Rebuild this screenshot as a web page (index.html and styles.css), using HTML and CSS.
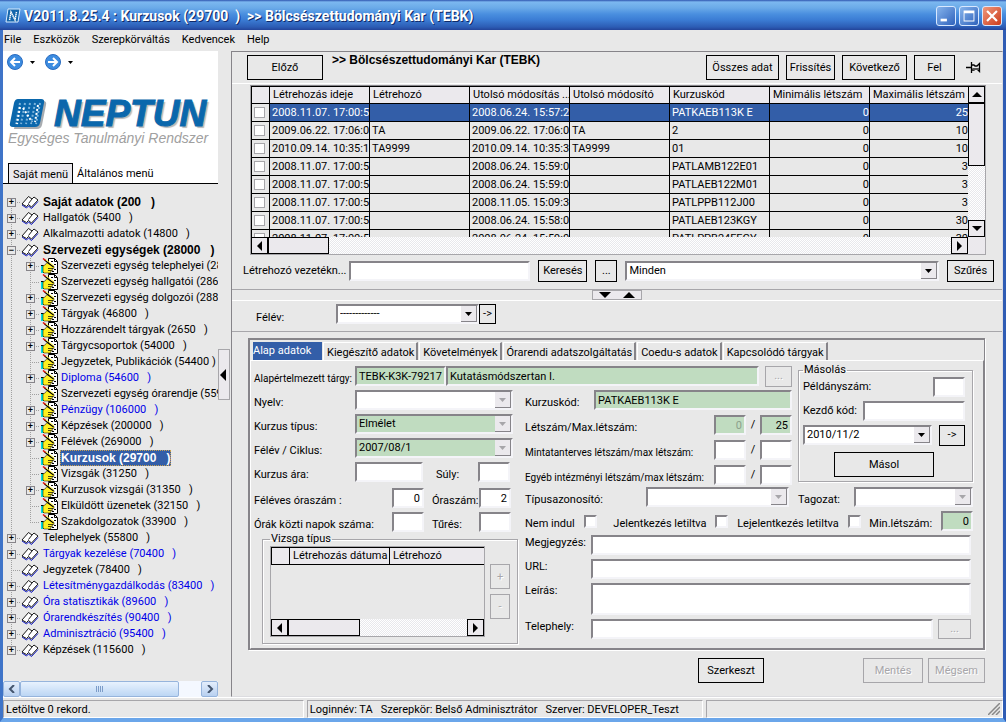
FILE: index.html
```html
<!DOCTYPE html>
<html lang="hu">
<head>
<meta charset="utf-8">
<title>Kurzusok (29700)</title>
<link rel="stylesheet" href="styles.css">
</head>
<body>
<svg class="defs" aria-hidden="true">
  <symbol id="book" viewBox="0 0 18 14">
    <path d="M1 9L7.500 1.500L11 4L13 2L17 5L10.500 12L7.500 9.500L5.500 11.500Z" fill="#fff"/>
    <path d="M1 10L5.500 13L7.500 11L10.500 13.500L17 6.500" fill="none" stroke="#1018c8"/>
    <path d="M1 9L7.500 1.500L11 4L13 2L17 5L10.500 12L7.500 9.500L5.500 11.500ZM11 4L7.500 8.500" fill="none" stroke="#000" stroke-width=".9"/>
  </symbol>
  <symbol id="hand" viewBox="0 0 17 16">
    <path d="M7.500 0.500H13.500L16.500 3.500V15.500H7.500Z" fill="#fff" stroke="#000"/>
    <path d="M13.500 0.500V3.500H16M10 3.500h2M13 6.500h2M13 11.500h2M11 13.500h2" fill="none" stroke="#000"/>
    <path d="M0 8h2v7H0z" fill="#00e0e0"/>
    <path d="M0 7.500H2.500V15" fill="none" stroke="#000"/>
    <path d="M2 8L4 7L6 4.500L8 6L13 8.500V10.500L11 11L11.500 12.500L10 13L9.500 15L3 15L2 14Z" fill="#fff020" stroke="#000" stroke-width=".5"/>
    <path d="M7 10.500H12M7 12.500H10.500" stroke="#000" stroke-width=".7"/>
    <path d="M3.500 2L12.500 9" stroke="#000" stroke-width="1.200"/>
    <path d="M4.500 1.500L13 8" stroke="#fff020" stroke-width=".9"/>
    <path d="M2 0.500L4.500 2.500" stroke="#e01010" stroke-width="1.600"/>
  </symbol>
  <symbol id="up" viewBox="0 0 10 5"><path d="M5 0L10 5H0Z"/></symbol>
  <symbol id="down" viewBox="0 0 10 5"><path d="M0 0H10L5 5Z"/></symbol>
  <symbol id="left" viewBox="0 0 5 10"><path d="M5 0V10L0 5Z"/></symbol>
  <symbol id="right" viewBox="0 0 5 10"><path d="M0 0V10L5 5Z"/></symbol>
</svg>
<div class="window">
  <header class="titlebar">
    <svg class="app-icon" viewBox="0 0 16 16"><path d="M3 1H15L13 14H1Z" fill="#1466ac" stroke="#d8ecff"/><path d="M4.500 12L6 4L10 12L11.500 4" fill="none" stroke="#fff" stroke-width="1.500" stroke-dasharray="1.500 .5"/></svg>
    <h1>V2011.8.25.4 : Kurzusok (29700  )  &gt;&gt; Bölcsészettudományi Kar (TEBK)</h1>
    <button class="win-btn" aria-label="Kis méret"><svg viewBox="0 0 20 20"><path d="M4 13h7v3H4z" fill="#fff"/></svg></button>
    <button class="win-btn" aria-label="Teljes méret"><svg viewBox="0 0 20 20"><path d="M4 4h12v12H4zM5 7v8h10V7z" fill="#fff" fill-rule="evenodd"/></svg></button>
    <button class="win-btn close" aria-label="Bezárás"><svg viewBox="0 0 20 20"><path d="M4.500 4.500l11 11M15.500 4.500l-11 11" stroke="#fff" stroke-width="2.400"/></svg></button>
  </header>
  <nav class="menubar"><a href="#">File</a><a href="#">Eszközök</a><a href="#">Szerepkörváltás</a><a href="#">Kedvencek</a><a href="#">Help</a></nav>

  <div class="main">
    <aside class="side">
      <div class="side-top">
        <div class="history">
          <button aria-label="Vissza"><svg width="16" height="16" viewBox="0 0 16 16"><circle cx="8" cy="8" r="7.500" fill="#3c8ce0" stroke="#2a6cc0"/><path d="M13 8H4M8 4L4 8L8 12" fill="none" stroke="#fff" stroke-width="2"/></svg></button>
          <svg class="caret" viewBox="0 0 5 3"><path d="M0 0H5L2.500 3Z"/></svg>
          <button aria-label="Előre"><svg width="16" height="16" viewBox="0 0 16 16"><circle cx="8" cy="8" r="7.500" fill="#3c8ce0" stroke="#2a6cc0"/><path d="M3 8H12M8 4L12 8L8 12" fill="none" stroke="#fff" stroke-width="2"/></svg></button>
          <svg class="caret" viewBox="0 0 5 3"><path d="M0 0H5L2.500 3Z"/></svg>
        </div>
        <div class="logo">
          <svg class="logo-mark" viewBox="0 0 38 32">
            <path d="M10 3H34Q38 3 37 7L33 27Q32 31 28 31H5Z" fill="#a8acb0"/>
            <path d="M9 1H32Q36 1 35 5L31 25Q30 29 26 29H4Q0 29 1 25L5 5Q6 1 9 1Z" fill="#0a67ac"/>
            <path d="M11 5L7 26M16 5L12 26M21 5L17 26M26 5L22 26M31 5L27 26" stroke="#7cb4dc" stroke-width="2" stroke-dasharray="2 2"/>
            <path d="M11 9L8 26M14 10L23 24M29 7L26 24" stroke="#fff" stroke-width="2" stroke-dasharray="2 2"/>
          </svg>
          <span class="logo-name">NEPTUN</span>
        </div>
        <p class="logo-sub">Egységes Tanulmányi Rendszer</p>
        <div class="side-tabs"><button class="on">Saját menü</button><button>Általános menü</button></div>
      </div>
      <ul class="tree">
        <li><div class="row b"><i class="ex">+</i><svg><use href="#book"/></svg><a href="#">Saját adatok (200   )</a></div></li>
        <li><div class="row"><i class="ex">+</i><svg><use href="#book"/></svg><a href="#">Hallgatók (5400   )</a></div></li>
        <li><div class="row"><i class="ex">+</i><svg><use href="#book"/></svg><a href="#">Alkalmazotti adatok (14800   )</a></div></li>
        <li><div class="row b"><i class="ex">−</i><svg><use href="#book"/></svg><a href="#">Szervezeti egységek (28000   )</a></div>
          <ul>
            <li><div class="row"><i class="ex">+</i><svg><use href="#hand"/></svg><a href="#">Szervezeti egység telephelyei (28</a></div></li>
            <li><div class="row"><i></i><svg><use href="#hand"/></svg><a href="#">Szervezeti egység hallgatói (2860</a></div></li>
            <li><div class="row"><i class="ex">+</i><svg><use href="#hand"/></svg><a href="#">Szervezeti egység dolgozói (2880</a></div></li>
            <li><div class="row"><i class="ex">+</i><svg><use href="#hand"/></svg><a href="#">Tárgyak (46800   )</a></div></li>
            <li><div class="row"><i class="ex">+</i><svg><use href="#hand"/></svg><a href="#">Hozzárendelt tárgyak (2650   )</a></div></li>
            <li><div class="row"><i class="ex">+</i><svg><use href="#hand"/></svg><a href="#">Tárgycsoportok (54000   )</a></div></li>
            <li><div class="row"><i></i><svg><use href="#hand"/></svg><a href="#">Jegyzetek, Publikációk (54400 )</a></div></li>
            <li><div class="row blue"><i class="ex">+</i><svg><use href="#hand"/></svg><a href="#">Diploma (54600   )</a></div></li>
            <li><div class="row"><i></i><svg><use href="#hand"/></svg><a href="#">Szervezeti egység órarendje (559</a></div></li>
            <li><div class="row blue"><i class="ex">+</i><svg><use href="#hand"/></svg><a href="#">Pénzügy (106000   )</a></div></li>
            <li><div class="row"><i class="ex">+</i><svg><use href="#hand"/></svg><a href="#">Képzések (200000   )</a></div></li>
            <li><div class="row"><i class="ex">+</i><svg><use href="#hand"/></svg><a href="#">Félévek (269000   )</a></div></li>
            <li><div class="row b sel"><i></i><svg><use href="#hand"/></svg><a href="#">Kurzusok (29700   )</a></div></li>
            <li><div class="row"><i></i><svg><use href="#hand"/></svg><a href="#">Vizsgák (31250   )</a></div></li>
            <li><div class="row"><i class="ex">+</i><svg><use href="#hand"/></svg><a href="#">Kurzusok vizsgái (31350   )</a></div></li>
            <li><div class="row"><i></i><svg><use href="#hand"/></svg><a href="#">Elküldött üzenetek (32150   )</a></div></li>
            <li><div class="row"><i></i><svg><use href="#hand"/></svg><a href="#">Szakdolgozatok (33900   )</a></div></li>
          </ul>
        </li>
        <li><div class="row"><i class="ex">+</i><svg><use href="#book"/></svg><a href="#">Telephelyek (55800   )</a></div></li>
        <li><div class="row blue"><i class="ex">+</i><svg><use href="#book"/></svg><a href="#">Tárgyak kezelése (70400   )</a></div></li>
        <li><div class="row"><i></i><svg><use href="#book"/></svg><a href="#">Jegyzetek (78400   )</a></div></li>
        <li><div class="row blue"><i class="ex">+</i><svg><use href="#book"/></svg><a href="#">Létesítménygazdálkodás (83400   )</a></div></li>
        <li><div class="row blue"><i class="ex">+</i><svg><use href="#book"/></svg><a href="#">Óra statisztikák (89600   )</a></div></li>
        <li><div class="row blue"><i class="ex">+</i><svg><use href="#book"/></svg><a href="#">Órarendkészítés (90400   )</a></div></li>
        <li><div class="row blue"><i class="ex">+</i><svg><use href="#book"/></svg><a href="#">Adminisztráció (95400   )</a></div></li>
        <li><div class="row"><i class="ex">+</i><svg><use href="#book"/></svg><a href="#">Képzések (115600   )</a></div></li>
      </ul>
      <div class="xp-scroll">
        <button aria-label="Balra"><svg viewBox="0 0 8 8"><path d="M6 0L2 4L6 8" fill="none" stroke="#44556e" stroke-width="2"/></svg></button>
        <span class="xp-thumb"></span>
        <button aria-label="Jobbra"><svg viewBox="0 0 8 8"><path d="M2 0L6 4L2 8" fill="none" stroke="#44556e" stroke-width="2"/></svg></button>
      </div>
    </aside>
    <div class="splitter"><button class="collapse" aria-label="Panel elrejtése"><svg width="8" height="12"><use href="#left"/></svg></button></div>

    <main class="content">
      <div class="toolbar">
        <button class="btn prev">Előző</button>
        <h2>&gt;&gt; Bölcsészettudományi Kar (TEBK)</h2>
        <button class="btn w73">Összes adat</button>
        <button class="btn w49">Frissítés</button>
        <button class="btn w65">Következő</button>
        <button class="btn w41">Fel</button>
        <svg class="pin" viewBox="0 0 15 11"><path d="M0 5.500H6M5.500 0V11M6 3H8L9 4H11L13.500 1.500V9.500L11 7H9L8 8H6" fill="none" stroke="#000" stroke-width="1.300"/><path d="M6 6h7v2H7z" fill="#555"/></svg>
      </div>

      <section class="list">
        <div class="grid">
          <div class="grid-main">
            <div class="table-clip">
              <table>
                <colgroup><col class="c-check"><col class="c"><col class="c"><col class="c"><col class="c"><col class="c"><col class="c"><col></colgroup>
                <thead><tr><th></th><th>Létrehozás ideje</th><th>Létrehozó</th><th>Utolsó módosítás ...</th><th>Utolsó módosító</th><th>Kurzuskód</th><th>Minimális létszám</th><th>Maximális létszám</th></tr></thead>
                <tbody>
                  <tr class="active"><td><input type="checkbox" aria-label="Sor 1"></td><td>2008.11.07. 17:00:5</td><td></td><td>2008.06.24. 15:57:2</td><td></td><td>PATKAEB113K E</td><td class="n">0</td><td class="n">25</td></tr>
                  <tr><td><input type="checkbox" aria-label="Sor 2"></td><td>2009.06.22. 17:06:0</td><td>TA</td><td>2009.06.22. 17:06:0</td><td>TA</td><td>2</td><td class="n">0</td><td class="n">10</td></tr>
                  <tr><td><input type="checkbox" aria-label="Sor 3"></td><td>2010.09.14. 10:35:1</td><td>TA9999</td><td>2010.09.14. 10:35:3</td><td>TA9999</td><td>01</td><td class="n">0</td><td class="n">10</td></tr>
                  <tr><td><input type="checkbox" aria-label="Sor 4"></td><td>2008.11.07. 17:00:5</td><td></td><td>2008.06.24. 15:59:0</td><td></td><td>PATLAMB122E01</td><td class="n">0</td><td class="n">3</td></tr>
                  <tr><td><input type="checkbox" aria-label="Sor 5"></td><td>2008.11.07. 17:00:5</td><td></td><td>2008.06.24. 15:59:0</td><td></td><td>PATLAEB122M01</td><td class="n">0</td><td class="n">3</td></tr>
                  <tr><td><input type="checkbox" aria-label="Sor 6"></td><td>2008.11.07. 17:00:5</td><td></td><td>2008.11.05. 15:09:3</td><td></td><td>PATLPPB112J00</td><td class="n">0</td><td class="n">3</td></tr>
                  <tr><td><input type="checkbox" aria-label="Sor 7"></td><td>2008.11.07. 17:00:5</td><td></td><td>2008.06.24. 15:58:0</td><td></td><td>PATLAEB123KGY</td><td class="n">0</td><td class="n">30</td></tr>
                  <tr><td><input type="checkbox" aria-label="Sor 8"></td><td>2008.11.07. 17:00:5</td><td></td><td>2008.06.24. 15:59:0</td><td></td><td>PATLPPB24FFGY</td><td class="n">0</td><td class="n">30</td></tr>
                </tbody>
              </table>
            </div>
            <div class="vscroll"><button aria-label="Fel"><svg width="10" height="5"><use href="#up"/></svg></button><span class="vthumb"></span><button aria-label="Le"><svg width="10" height="5"><use href="#down"/></svg></button></div>
          </div>
          <div class="hscroll"><button aria-label="Balra"><svg width="5" height="10"><use href="#left"/></svg></button><span class="hthumb"></span><button aria-label="Jobbra"><svg width="5" height="10"><use href="#right"/></svg></button><span class="corner"></span></div>
        </div>
        <div class="search">
          <label for="q">Létrehozó vezetékn...</label>
          <input id="q" type="text">
          <button class="btn w49">Keresés</button>
          <button class="btn w22">...</button>
          <select aria-label="Szűrő"><option>Minden</option></select>
          <button class="btn w47">Szűrés</button>
        </div>
      </section>
      <div class="updown"><button aria-label="Lista le és fel"><svg width="12" height="6"><use href="#down"/></svg><svg width="12" height="6"><use href="#up"/></svg></button></div>

      <div class="term">
        <label for="felev">Félév:</label>
        <select id="felev"><option>-------------</option></select>
        <button class="btn go">-&gt;</button>
      </div>

      <section class="tabbox">
        <div class="tabs">
          <button class="on">Alap adatok</button><button>Kiegészítő adatok</button><button>Követelmények</button><button>Órarendi adatszolgáltatás</button><button>Coedu-s adatok</button><button>Kapcsolódó tárgyak</button>
        </div>
        <form class="form">
          <div class="f subject">
            <label class="long" for="t1">Alapértelmezett tárgy:</label>
            <input id="t1" class="green code" value="TEBK-K3K-79217">
            <input class="green grow" aria-label="Tárgynév" value="Kutatásmódszertan I.">
            <button type="button" class="btn w27" disabled>...</button>
          </div>

          <div class="left">
            <div class="f"><label for="ny">Nyelv:</label><select id="ny" disabled class="grow"><option></option></select></div>
            <div class="f"><label for="kt">Kurzus típus:</label><select id="kt" disabled class="green grow"><option>Elmélet</option></select></div>
            <div class="f"><label for="fc">Félév / Ciklus:</label><select id="fc" disabled class="green grow"><option>2007/08/1</option></select></div>
            <div class="f"><label for="ka">Kurzus ára:</label><input id="ka" class="price"><label class="l2" for="su">Súly:</label><input id="su" class="sm"></div>
            <div class="f hours"><label class="wide" for="fo">Féléves óraszám :</label><input id="fo" class="sm n" value="0"><label class="l3" for="os">Óraszám:</label><input id="os" class="sm n" value="2"></div>
            <div class="f"><label class="wide" for="on">Órák közti napok száma:</label><input id="on" class="sm"><label class="l3" for="tu">Tűrés:</label><input id="tu" class="sm"></div>
            <fieldset class="exam">
              <legend>Vizsga típus</legend>
              <div class="exam-grid">
                <table><colgroup><col class="c-check"><col class="c"><col></colgroup><thead><tr><th></th><th>Létrehozás dátuma</th><th>Létrehozó</th></tr></thead></table>
                <div class="hscroll"><button type="button" aria-label="Balra"><svg width="5" height="10"><use href="#left"/></svg></button><span class="hthumb"></span><button type="button" aria-label="Jobbra"><svg width="5" height="10"><use href="#right"/></svg></button></div>
              </div>
              <div class="pm"><button type="button" class="btn" disabled>+</button><button type="button" class="btn" disabled>-</button></div>
            </fieldset>
          </div>

          <div class="mid">
            <div class="f"><label class="short" for="kk">Kurzuskód:</label><input id="kk" class="green grow" value="PATKAEB113K E"></div>
            <div class="f"><label class="grow" for="l1">Létszám/Max.létszám:</label><input id="l1" class="green sm n" disabled value="0"><span class="slash">/</span><input class="green sm n" aria-label="Max.létszám" value="25"></div>
            <div class="f"><label class="grow long" for="m1">Mintatanterves létszám/max létszám:</label><input id="m1" class="sm"><span class="slash">/</span><input class="sm" aria-label="Max létszám"></div>
            <div class="f"><label class="grow long" for="e1">Egyéb intézményi létszám/max létszám:</label><input id="e1" class="sm"><span class="slash">/</span><input class="sm" aria-label="Max létszám"></div>
          </div>

          <fieldset class="copy">
            <legend>Másolás</legend>
            <div class="f"><label class="grow" for="pd">Példányszám:</label><input id="pd" class="sm"></div>
            <div class="f"><label class="kez" for="kz">Kezdő kód:</label><input id="kz" class="grow"></div>
            <div class="f"><select class="grow" aria-label="Félév"><option>2010/11/2</option></select><button type="button" class="btn w26">-&gt;</button></div>
            <button type="button" class="btn copy-btn">Másol</button>
          </fieldset>

          <div class="bottom">
            <div class="f types"><label for="ta" class="tl">Típusazonosító:</label><select id="ta" disabled class="ts"><option></option></select><label class="tg" for="tz">Tagozat:</label><select id="tz" disabled class="tz"><option></option></select></div>
            <div class="f checks"><label for="c1">Nem indul</label><input type="checkbox" id="c1"><label for="c2" class="c2">Jelentkezés letiltva</label><input type="checkbox" id="c2"><label for="c3">Lejelentkezés letiltva</label><input type="checkbox" id="c3"><label class="min" for="ml">Min.létszám:</label><input id="ml" class="green sm n" value="0"></div>
            <div class="f"><label class="bl" for="mj">Megjegyzés:</label><input id="mj" class="grow"></div>
            <div class="f"><label class="bl" for="url">URL:</label><input id="url" class="grow"></div>
            <div class="f"><label class="bl" for="le">Leírás:</label><textarea id="le" class="grow"></textarea></div>
            <div class="f"><label class="bl" for="th">Telephely:</label><input id="th" class="grow"><button type="button" class="btn w33" disabled>...</button></div>
          </div>
        </form>
      </section>

      <div class="actions">
        <button class="btn edit">Szerkeszt</button>
        <button class="btn save" disabled>Mentés</button>
        <button class="btn cancel" disabled>Mégsem</button>
      </div>
    </main>
  </div>

  <footer class="status">
    <span class="s1">Letöltve 0 rekord.</span>
    <span class="s2">Loginnév: TA   Szerepkör: Belső Adminisztrátor   Szerver: DEVELOPER_Teszt</span>
    <span class="s3"><svg viewBox="0 0 12 12"><path d="M0 12L12 0M4 12L12 4M8 12L12 8" stroke="#888" stroke-width="1.500"/></svg></span>
  </footer>
</div>
</body>
</html>
```
FILE: styles.css
```css
:root {
  --bg: #e8e8e8;
  --btn: #ebe9ed;
  --dark: #868489;
  --mid: #a7a6aa;
  --green: #c0dcc0;
  --sel: #335ea8;
}
* { box-sizing: border-box; }
body {
  margin: 0;
  background: var(--bg);
  color: #000;
  font: 11px/14px Roboto, "Liberation Sans", sans-serif;
}
button, input, select, textarea { font: inherit; color: inherit; margin: 0; border-radius: 0; outline: 0; }
a { color: inherit; text-decoration: none; }
.defs { position: absolute; width: 0; height: 0; }
.window {
  display: flex;
  flex-direction: column;
  min-height: 100vh;
  border: solid #2450a8;
  border-width: 0 3px 4px;
  border-color: #2450a8 #2f5cb4 #6ba6ea #3f74c8;
  background: var(--bg);
}

/* title and menu */
.titlebar {
  display: flex;
  align-items: center;
  gap: 3px;
  height: 30px;
  margin: 0 -3px;
  padding: 2px 4px 0 5px;
  background: linear-gradient(#2f56b0 0, #7cb8f0 2px, #6aaae8 8px, #4a8fdf 14px, #3b7cd4 20px, #2c5cb4 27px, #23449a 30px);
}
.app-icon { width: 16px; height: 16px; }
.titlebar h1 {
  flex: 1;
  margin: 0;
  color: #fff;
  font: bold 14px/18px Roboto, sans-serif;
  white-space: pre;
  text-shadow: 1px 1px #102a68;
}
.win-btn {
  width: 20px;
  height: 20px;
  padding: 0;
  border: 1px solid #d8e8ff;
  border-radius: 3px;
  background: linear-gradient(135deg, #86b4ec, #2f62bc);
}
.win-btn svg { display: block; width: 18px; height: 18px; }
.win-btn.close { background: linear-gradient(135deg, #f0987c, #cc3c1c); }
.menubar { display: flex; gap: 12px; height: 21px; padding: 3px 1px; }

/* frame */
.main { flex: 1; display: flex; min-height: 0; }
.side { width: 215px; display: flex; flex-direction: column; overflow: hidden; }
.side-top { display: flex; flex-direction: column; background: #fff; }
.history { display: flex; align-items: center; gap: 7px; padding: 3px 4px 0; }
.history button { padding: 0; border: 0; background: none; height: 16px; }
.history svg { display: block; }
.history .caret { width: 5px; height: 3px; margin-right: 3px; }
.logo { display: flex; align-items: center; gap: 7px; padding: 26px 5px 0 6px; }
.logo-mark { width: 38px; height: 32px; }
.logo-name {
  color: #0a67ac;
  font: italic bold 37px/36px "Liberation Sans", sans-serif;
  -webkit-text-stroke: 1px #0a67ac;
  text-shadow: 2px 2px 1px #b8b8b8;
}
.logo-sub { margin: -2px 0 17px 5px; color: #a0a0a0; font: italic 14px/16px "Liberation Sans", sans-serif; white-space: nowrap; }
.side-tabs { display: flex; border-bottom: 1px solid #000; padding-left: 5px; }
.side-tabs button { height: 20px; padding: 2px 4px 0; border: 0; background: #fff; }
.side-tabs .on { margin-bottom: -1px; border: 1px solid #000; border-bottom: 0; background: var(--btn); }

/* tree */
.tree, .tree ul { list-style: none; margin: 0; padding: 0; }
.tree {
  flex: 1;
  margin-top: 10px;
  background: repeating-linear-gradient(#a0a0a0 0 1px, transparent 1px 2px) 8px 8px / 1px 448px no-repeat;
}
.tree ul {
  margin-left: 19px;
  background: repeating-linear-gradient(#a0a0a0 0 1px, transparent 1px 2px) 8px 0 / 1px calc(100% - 8px) no-repeat;
}
.row {
  display: flex;
  align-items: center;
  height: 16px;
  padding-left: 4px;
  white-space: pre;
  background: repeating-linear-gradient(90deg, #a0a0a0 0 1px, transparent 1px 2px) 8px 8px / 10px 1px no-repeat;
}
.row i { width: 9px; height: 9px; flex: none; }
.row .ex { border: 1px solid var(--dark); background: var(--bg); font: bold 9px/7px "Liberation Sans", sans-serif; text-align: center; }
.row svg { width: 18px; height: 14px; margin: 0 3px 0 5px; flex: none; }
.tree ul .row svg { width: 17px; height: 16px; margin: 0 2px 0 6px; }
.row a { padding: 0 1px; }
.row.b a { font: bold 12px/16px "Liberation Sans", sans-serif; }
.row.blue a { color: #0000e8; }
.row.sel a { color: #fff; background: var(--sel); outline: 1px dotted #c8a050; outline-offset: -1px; }
.xp-scroll { display: flex; height: 16px; background: #f4f8ff; }
.xp-scroll button { width: 17px; padding: 0; border: 1px solid #96b4dc; border-radius: 2px; background: linear-gradient(#e4eefc, #b8d0f0); }
.xp-scroll svg { display: block; width: 8px; height: 8px; margin: auto; }
.xp-thumb {
  width: 159px;
  margin-right: auto;
  border: 1px solid #96b4dc;
  border-radius: 2px;
  background: repeating-linear-gradient(90deg, #7c9cc8 0 1px, transparent 1px 2px) center / 8px 6px no-repeat, linear-gradient(#e8f2fe, #bcd6f4);
}
.splitter { position: relative; width: 13px; flex: none; }
.collapse { position: absolute; right: 1px; top: 298px; width: 12px; height: 51px; padding: 0; border: 1px solid var(--mid); background: var(--btn); }
.collapse svg { display: block; }

.content { flex: 1; min-width: 0; display: flex; flex-direction: column; border: 1px solid var(--dark); border-color: var(--dark) #dcdce0 #dcdce0 var(--dark); }

/* buttons and fields */
.btn { height: 25px; padding: 0; flex: none; border: 1px solid #000; background: var(--bg); text-align: center; white-space: nowrap; }
.btn:disabled { border-color: var(--mid); color: var(--mid); text-shadow: 1px 1px #fff; }
.w22 { width: 22px; } .w26 { width: 26px; } .w27 { width: 27px; } .w33 { width: 33px; }
.w41 { width: 41px; } .w47 { width: 47px; } .w49 { width: 49px; } .w65 { width: 65px; } .w73 { width: 73px; }
input, select, textarea {
  height: 20px;
  min-width: 0;
  padding: 0 2px;
  border: 2px solid;
  border-color: var(--dark) #f4f4f8 #f4f4f8 var(--dark);
  background: #fff;
  appearance: none;
}
textarea { display: block; height: 32px; resize: none; }
select {
  padding: 0 18px 0 2px;
  background: #fff url("data:image/svg+xml,%3Csvg xmlns='http://www.w3.org/2000/svg' width='16' height='16'%3E%3Cpath d='M0 0h16v16H0z' fill='%23868489'/%3E%3Cpath d='M0 0h15v15H0z' fill='%23ebe9ed'/%3E%3Cpath d='M4 6h7l-3.500 4z'/%3E%3C/svg%3E") right center no-repeat;
}
select:disabled {
  opacity: 1;
  color: #000;
  background-image: url("data:image/svg+xml,%3Csvg xmlns='http://www.w3.org/2000/svg' width='16' height='16'%3E%3Cpath d='M0 0h16v16H0z' fill='%23868489'/%3E%3Cpath d='M0 0h15v15H0z' fill='%23ebe9ed'/%3E%3Cpath d='M4 6h7l-3.500 4z' fill='%23a7a6aa'/%3E%3C/svg%3E");
}
.green { background-color: var(--green); }
input:disabled { color: #8ca08c; }
.n { text-align: right; }
input[type="checkbox"] { width: 13px; height: 13px; padding: 0; flex: none; }
.sm { width: 32px; flex: none; }
.grow { flex: 1; }

.toolbar { display: flex; align-items: center; gap: 7px; padding: 3px 21px 3px 15px; border-bottom: 1px solid #fff; }
.toolbar h2 { flex: 1; align-self: flex-start; margin: -3px 0 0 2px; font: bold 12px/16px "Liberation Sans", sans-serif; white-space: nowrap; }
.prev { width: 76px; }
.pin { width: 15px; height: 11px; margin-left: 4px; }

/* course list */
.list { padding: 1px 7px 7px 18px; border-bottom: 1px solid var(--mid); }
.grid { margin-right: 9px; border: 1px solid var(--mid); border-top: 1px solid var(--dark); }
.grid-main { display: flex; height: 151px; }
.table-clip { flex: 1; min-width: 0; overflow: hidden; }
table { width: 100%; border-collapse: separate; border-spacing: 0; table-layout: fixed; }
.c-check { width: 19px; }
.c { width: 100px; }
th { height: 18px; padding: 0 0 0 3px; border: solid #000; border-width: 1px 1px 1px 0; background: var(--btn); font-weight: normal; text-align: left; white-space: nowrap; overflow: hidden; line-height: 14px; }
th:last-child { border-right: 0; }
th:first-child, td:first-child { border-left: 1px solid #000; }
td { height: 18px; padding: 0 0 0 2px; border: solid #000; border-width: 0 1px 1px 0; white-space: nowrap; overflow: hidden; line-height: 14px; }
td:last-child { border-right: 0; }
td input[type="checkbox"] { display: block; width: 11px; height: 11px; border: 1px solid var(--mid); }
tr.active td:not(:first-child) { background: var(--sel); color: #fff; }
.vscroll, .hscroll { background: repeating-conic-gradient(#e8e8ec 0 25%, #fff 0 50%) 0 0 / 2px 2px; }
.vscroll { display: flex; flex-direction: column; width: 17px; }
.vscroll button, .hscroll button { width: 17px; height: 17px; padding: 0; flex: none; border: 1px solid #000; background: var(--btn); }
.vscroll svg, .hscroll svg { display: block; margin: auto; }
.vthumb { height: 63px; margin-bottom: auto; border: 1px solid #000; background: var(--btn); }
.hscroll { display: flex; height: 17px; }
.hthumb { width: 61px; margin-right: auto; border: 1px solid #000; background: var(--btn); }
.corner { width: 17px; background: var(--btn); }
.search { display: flex; align-items: center; gap: 8px; margin: 5px 1px 0 -7px; }
.search label { width: 98px; flex: none; white-space: nowrap; }
.search input { flex: 185 1 0; }
.search select { flex: 309 1 0; }
.search .btn { height: 22px; }
.updown { display: flex; justify-content: center; height: 10px; }
.updown button { display: flex; align-items: center; justify-content: center; gap: 12px; width: 50px; height: 10px; padding: 0; border: 1px solid var(--mid); background: var(--btn); }
.term { display: flex; align-items: center; height: 32px; padding: 0 24px; border-top: 1px solid #fff; border-bottom: 1px solid var(--mid); }
.term label { width: 80px; padding-top: 3px; }
.term select { width: 143px; margin-bottom: 4px; }
.term .go { width: 17px; height: 20px; margin-bottom: 4px; }

/* tabs and form */
.tabbox { margin: 6px 17px 0 16px; border: 1px solid var(--dark); border-width: 2px 1px 1px 2px; box-shadow: 1px 1px #fff; }
.tabs { display: flex; gap: 1px; padding: 2px 3px 0; }
.tabs button { height: 18px; padding: 2px 2px 0 3px; border: 0; border-top: 1px solid #fff; border-left: 1px solid #fff; border-right: 2px solid var(--dark); background: var(--bg); white-space: nowrap; }
.tabs .on { width: 69px; padding: 0; border: 0; background: var(--sel); color: #fff; text-align: left; }
.form {
  display: grid;
  grid-template-columns: 264px minmax(0, 1fr) 175px;
  grid-template-areas: "subject subject copy" "left mid copy" "left bottom bottom";
  grid-template-rows: auto auto 1fr;
  column-gap: 6px;
  padding: 5px 10px 4px 3px;
  border: 1px solid;
  border-color: #fff var(--dark) var(--dark) #fff;
}
.f { display: flex; align-items: center; height: 20px; }
.f label { padding-top: 5px; white-space: nowrap; }
.f .long { font-size: 10px; }
.subject { grid-area: subject; margin-bottom: 4px; }
.subject label { width: 101px; flex: none; }
.code { width: 91px; }
.subject .btn { height: 21px; margin-left: 6px; }
.left { grid-area: left; display: flex; flex-direction: column; gap: 4px; padding-right: 5px; }
.left label { width: 101px; flex: none; }
.left .price { width: 68px; }
.left .l2 { width: 55px; padding-left: 13px; }
.left .wide { width: 138px; }
.left .l3 { width: 55px; padding-left: 8px; }
.hours { margin-top: 2px; }
.mid { grid-area: mid; display: flex; flex-direction: column; gap: 5px; padding-left: 1px; }
.mid .short { width: 69px; }
.slash { width: 14px; flex: none; text-align: center; }
fieldset { min-width: 0; margin: 0; border: 1px solid var(--mid); box-shadow: 1px 1px #fff, inset 1px 1px #fff; }
legend { padding: 0 1px; line-height: 14px; }
.exam { display: flex; gap: 5px; margin: -4px -5px 0 8px; padding: 0 7px 6px; }
.exam-grid { flex: 1; min-width: 0; display: flex; flex-direction: column; justify-content: space-between; height: 91px; border: 1px solid var(--mid); }
.exam-grid .hthumb { width: 72px; }
.pm { display: flex; flex-direction: column; gap: 5px; padding-top: 18px; }
.pm .btn { width: 20px; }
.copy { grid-area: copy; display: flex; flex-direction: column; gap: 4px; padding: 0 7px 4px 4px; margin-top: -3px; align-self: start; }
.copy .f label { padding-top: 0; }
.copy .kez { width: 60px; }
.copy .w26 { height: 21px; margin-left: 7px; }
.copy-btn { width: 100px; margin: 3px auto 0; }
.bottom { grid-area: bottom; display: flex; flex-direction: column; gap: 4px; padding: 2px 0 0 1px; }
.tl { width: 121px; }
.ts { flex: 1; }
.tg { width: 65px; padding-left: 9px; }
.tz { width: 119px; }
.checks { justify-content: space-between; }
.checks .c2 { margin-left: 8px; }
.bl { width: 66px; align-self: flex-start; }
.bottom .f:has(.bl) { height: auto; min-height: 20px; padding-right: 2px; }
.bottom .f .bl { padding-top: 1px; }
.bottom .w33 { height: 20px; margin-left: 5px; }
.actions { display: flex; gap: 5px; padding: 8px 17px 13px; }
.edit { width: 66px; margin: 0 94px 0 auto; }
.save { width: 60px; }
.cancel { width: 57px; }

.status { display: flex; gap: 3px; padding-top: 2px; border-top: 1px solid #fff; }
.status span { height: 18px; padding: 2px; border: 1px solid; border-color: var(--mid) #fff #fff var(--mid); white-space: pre; overflow: hidden; }
.s1 { flex: 300 1 0; }
.s2 { flex: 397 1 0; }
.s3 { flex: 296 1 0; text-align: right; }
.s3 svg { width: 12px; height: 12px; }
```
